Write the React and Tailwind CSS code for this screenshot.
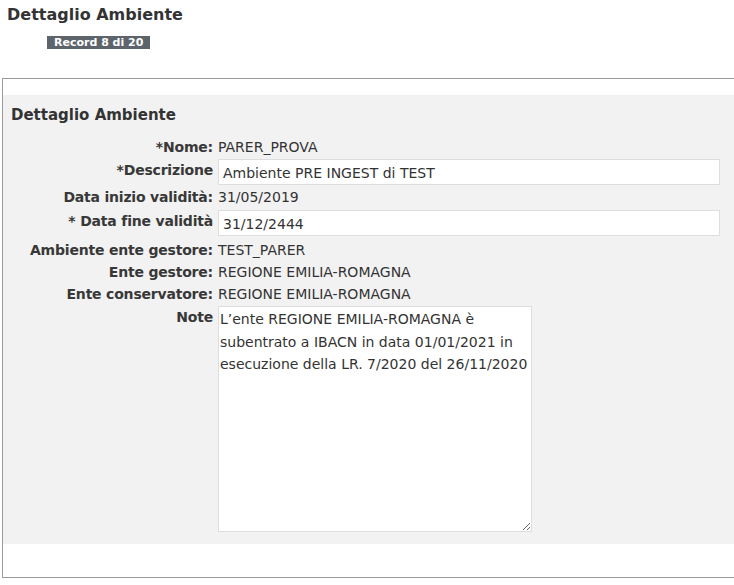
const font = { fontFamily: '"DejaVu Sans", Verdana, sans-serif' };

function Row({ label, children, top = false }) {
  return (
    <div className={`flex ${top ? 'items-start' : 'items-center'} gap-[5px] leading-[22px]`}>
      <div className="w-[202px] shrink-0 text-right font-bold text-[#383838] text-[14px] leading-[22px] tracking-[-0.2px]">
        {label}
      </div>
      <div className="flex-1 min-w-0 leading-[22px]">{children}</div>
    </div>
  );
}

function Value({ children }) {
  return <span className="text-[14px] leading-[22px] text-[#333]">{children}</span>;
}

function TextInput({ value }) {
  return (
    <input
      readOnly
      value={value}
      className="block w-[502px] h-[26px] bg-white border border-[#dedede] px-[4px] pt-[2px] text-[14px] text-[#333] outline-none"
      style={font}
    />
  );
}

export default function App() {
  return (
    <div className="min-h-[585px] bg-white text-[#333]" style={font}>
      <div className="pl-[7px] pt-[4px]">
        <h1 className="text-[16px] font-bold leading-[22px] text-[#333]">Dettaglio Ambiente</h1>
        <div className="mt-[10px] ml-[40px] inline-block bg-[#5e646c] px-[7px] text-[11px] font-bold leading-[13px] text-white">
          Record 8 di 20
        </div>
      </div>

      <div className="ml-[2px] mt-[25px] w-[calc(100%+10px)] border border-r-0 border-[#9a9a9a] pt-[16px] pb-[33px]">
        <div className="bg-[#f2f2f2] pl-[8px] pt-[9px] pb-[12px]">
          <h2 className="text-[15px] font-bold leading-[22px] text-[#333]">Dettaglio Ambiente</h2>

          <div className="mt-[10px] flex flex-col">
            <Row label="*Nome:">
              <Value>PARER_PROVA</Value>
            </Row>
            <div className="mt-[1px]">
              <Row label="*Descrizione" top>
                <TextInput value="Ambiente PRE INGEST di TEST" />
              </Row>
            </div>
            <div className="mt-[1px]">
              <Row label="Data inizio validità:">
                <Value>31/05/2019</Value>
              </Row>
            </div>
            <div className="mt-[2px]">
              <Row label="* Data fine validità" top>
                <TextInput value="31/12/2444" />
              </Row>
            </div>
            <div className="mt-[3px]">
              <Row label="Ambiente ente gestore:">
                <Value>TEST_PARER</Value>
              </Row>
            </div>
            <Row label="Ente gestore:">
              <Value>REGIONE EMILIA-ROMAGNA</Value>
            </Row>
            <Row label="Ente conservatore:">
              <Value>REGIONE EMILIA-ROMAGNA</Value>
            </Row>
            <div className="mt-[1px]">
              <Row label="Note" top>
                <textarea
                  readOnly
                  defaultValue="L’ente REGIONE EMILIA-ROMAGNA è subentrato a IBACN in data 01/01/2021 in esecuzione della LR. 7/2020 del 26/11/2020"
                  className="block w-[314px] h-[226px] bg-white border border-[#dedede] px-[1px] pt-[1px] text-[14px] leading-[22.5px] text-[#333] outline-none"
                  style={font}
                />
              </Row>
            </div>
          </div>
        </div>
      </div>
    </div>
  );
}
